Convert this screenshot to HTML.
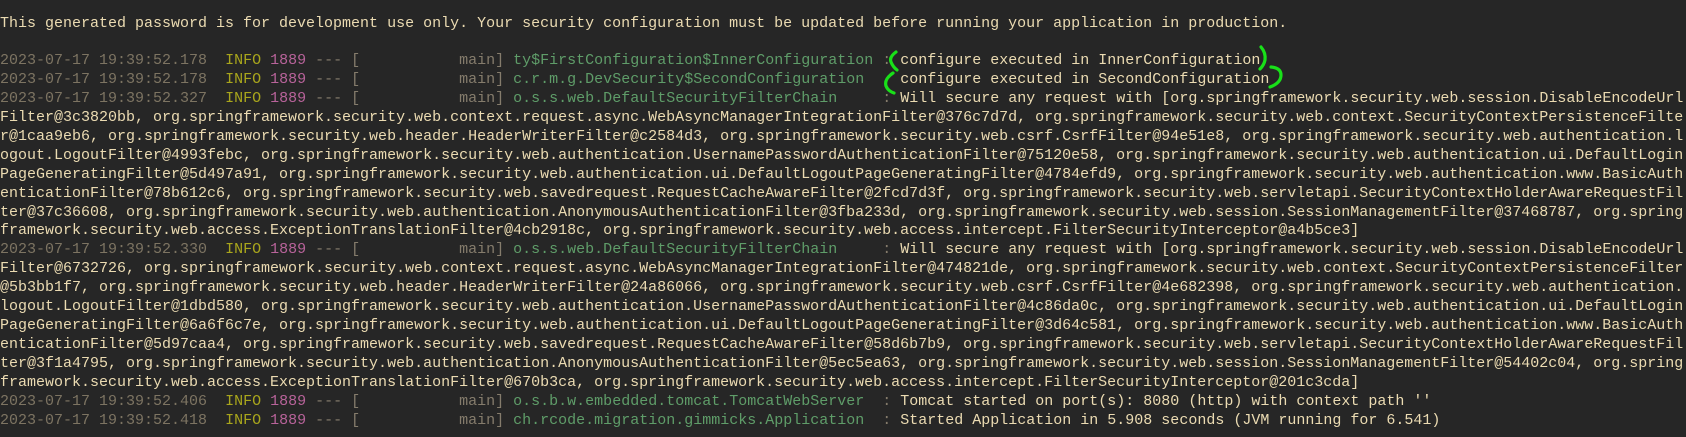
<!DOCTYPE html>
<html><head><meta charset="utf-8"><style>
html,body{margin:0;padding:0;background:#262626;width:1686px;height:437px;overflow:hidden}
pre{margin:0;position:absolute;left:0;top:14.5px;width:1684px;font-family:"Liberation Mono",monospace;font-size:15px;line-height:18.9px;color:#ebdbb2;white-space:pre-wrap;word-break:break-all;}
.t{color:#7d7462}.i{color:#a9a61c}.p{color:#b8639a}.d{color:#857c6c}.l{color:#5f9d69}
svg{position:absolute;left:0;top:0}
</style></head><body>
<pre>This generated password is for development use only. Your security configuration must be updated before running your application in production.

<span class="t">2023-07-17 19:39:52.178</span>  <span class="i">INFO</span> <span class="p">1889</span> <span class="d">--- [           main]</span> <span class="l">ty$FirstConfiguration$InnerConfiguration</span> <span class="d">:</span> configure executed in InnerConfiguration
<span class="t">2023-07-17 19:39:52.178</span>  <span class="i">INFO</span> <span class="p">1889</span> <span class="d">--- [           main]</span> <span class="l">c.r.m.g.DevSecurity$SecondConfiguration </span> <span class="d"> </span> configure executed in SecondConfiguration
<span class="t">2023-07-17 19:39:52.327</span>  <span class="i">INFO</span> <span class="p">1889</span> <span class="d">--- [           main]</span> <span class="l">o.s.s.web.DefaultSecurityFilterChain    </span> <span class="d">:</span> Will secure any request with [org.springframework.security.web.session.DisableEncodeUrlFilter@3c3820bb, org.springframework.security.web.context.request.async.WebAsyncManagerIntegrationFilter@376c7d7d, org.springframework.security.web.context.SecurityContextPersistenceFilter@1caa9eb6, org.springframework.security.web.header.HeaderWriterFilter@c2584d3, org.springframework.security.web.csrf.CsrfFilter@94e51e8, org.springframework.security.web.authentication.logout.LogoutFilter@4993febc, org.springframework.security.web.authentication.UsernamePasswordAuthenticationFilter@75120e58, org.springframework.security.web.authentication.ui.DefaultLoginPageGeneratingFilter@5d497a91, org.springframework.security.web.authentication.ui.DefaultLogoutPageGeneratingFilter@4784efd9, org.springframework.security.web.authentication.www.BasicAuthenticationFilter@78b612c6, org.springframework.security.web.savedrequest.RequestCacheAwareFilter@2fcd7d3f, org.springframework.security.web.servletapi.SecurityContextHolderAwareRequestFilter@37c36608, org.springframework.security.web.authentication.AnonymousAuthenticationFilter@3fba233d, org.springframework.security.web.session.SessionManagementFilter@37468787, org.springframework.security.web.access.ExceptionTranslationFilter@4cb2918c, org.springframework.security.web.access.intercept.FilterSecurityInterceptor@a4b5ce3]
<span class="t">2023-07-17 19:39:52.330</span>  <span class="i">INFO</span> <span class="p">1889</span> <span class="d">--- [           main]</span> <span class="l">o.s.s.web.DefaultSecurityFilterChain    </span> <span class="d">:</span> Will secure any request with [org.springframework.security.web.session.DisableEncodeUrlFilter@6732726, org.springframework.security.web.context.request.async.WebAsyncManagerIntegrationFilter@474821de, org.springframework.security.web.context.SecurityContextPersistenceFilter@5b3bb1f7, org.springframework.security.web.header.HeaderWriterFilter@24a86066, org.springframework.security.web.csrf.CsrfFilter@4e682398, org.springframework.security.web.authentication.logout.LogoutFilter@1dbd580, org.springframework.security.web.authentication.UsernamePasswordAuthenticationFilter@4c86da0c, org.springframework.security.web.authentication.ui.DefaultLoginPageGeneratingFilter@6a6f6c7e, org.springframework.security.web.authentication.ui.DefaultLogoutPageGeneratingFilter@3d64c581, org.springframework.security.web.authentication.www.BasicAuthenticationFilter@5d97caa4, org.springframework.security.web.savedrequest.RequestCacheAwareFilter@58d6b7b9, org.springframework.security.web.servletapi.SecurityContextHolderAwareRequestFilter@3f1a4795, org.springframework.security.web.authentication.AnonymousAuthenticationFilter@5ec5ea63, org.springframework.security.web.session.SessionManagementFilter@54402c04, org.springframework.security.web.access.ExceptionTranslationFilter@670b3ca, org.springframework.security.web.access.intercept.FilterSecurityInterceptor@201c3cda]
<span class="t">2023-07-17 19:39:52.406</span>  <span class="i">INFO</span> <span class="p">1889</span> <span class="d">--- [           main]</span> <span class="l">o.s.b.w.embedded.tomcat.TomcatWebServer </span> <span class="d">:</span> Tomcat started on port(s): 8080 (http) with context path ''
<span class="t">2023-07-17 19:39:52.418</span>  <span class="i">INFO</span> <span class="p">1889</span> <span class="d">--- [           main]</span> <span class="l">ch.rcode.migration.gimmicks.Application </span> <span class="d">:</span> Started Application in 5.908 seconds (JVM running for 6.541)</pre>
<svg width="1686" height="437" fill="none" stroke="#19e019" stroke-width="3.2" stroke-linecap="round">
<path d="M896 52 Q889 57 891 62 Q893 67 897 70"/>
<path d="M893 73 Q884 79 886 86 Q888 91 894 93"/>
<path d="M1261 47 Q1266 53 1265 60 Q1264 65 1260 69"/>
<path d="M1271 67 Q1281 68 1281 75 Q1281 83 1270 87"/>
</svg>
</body></html>
